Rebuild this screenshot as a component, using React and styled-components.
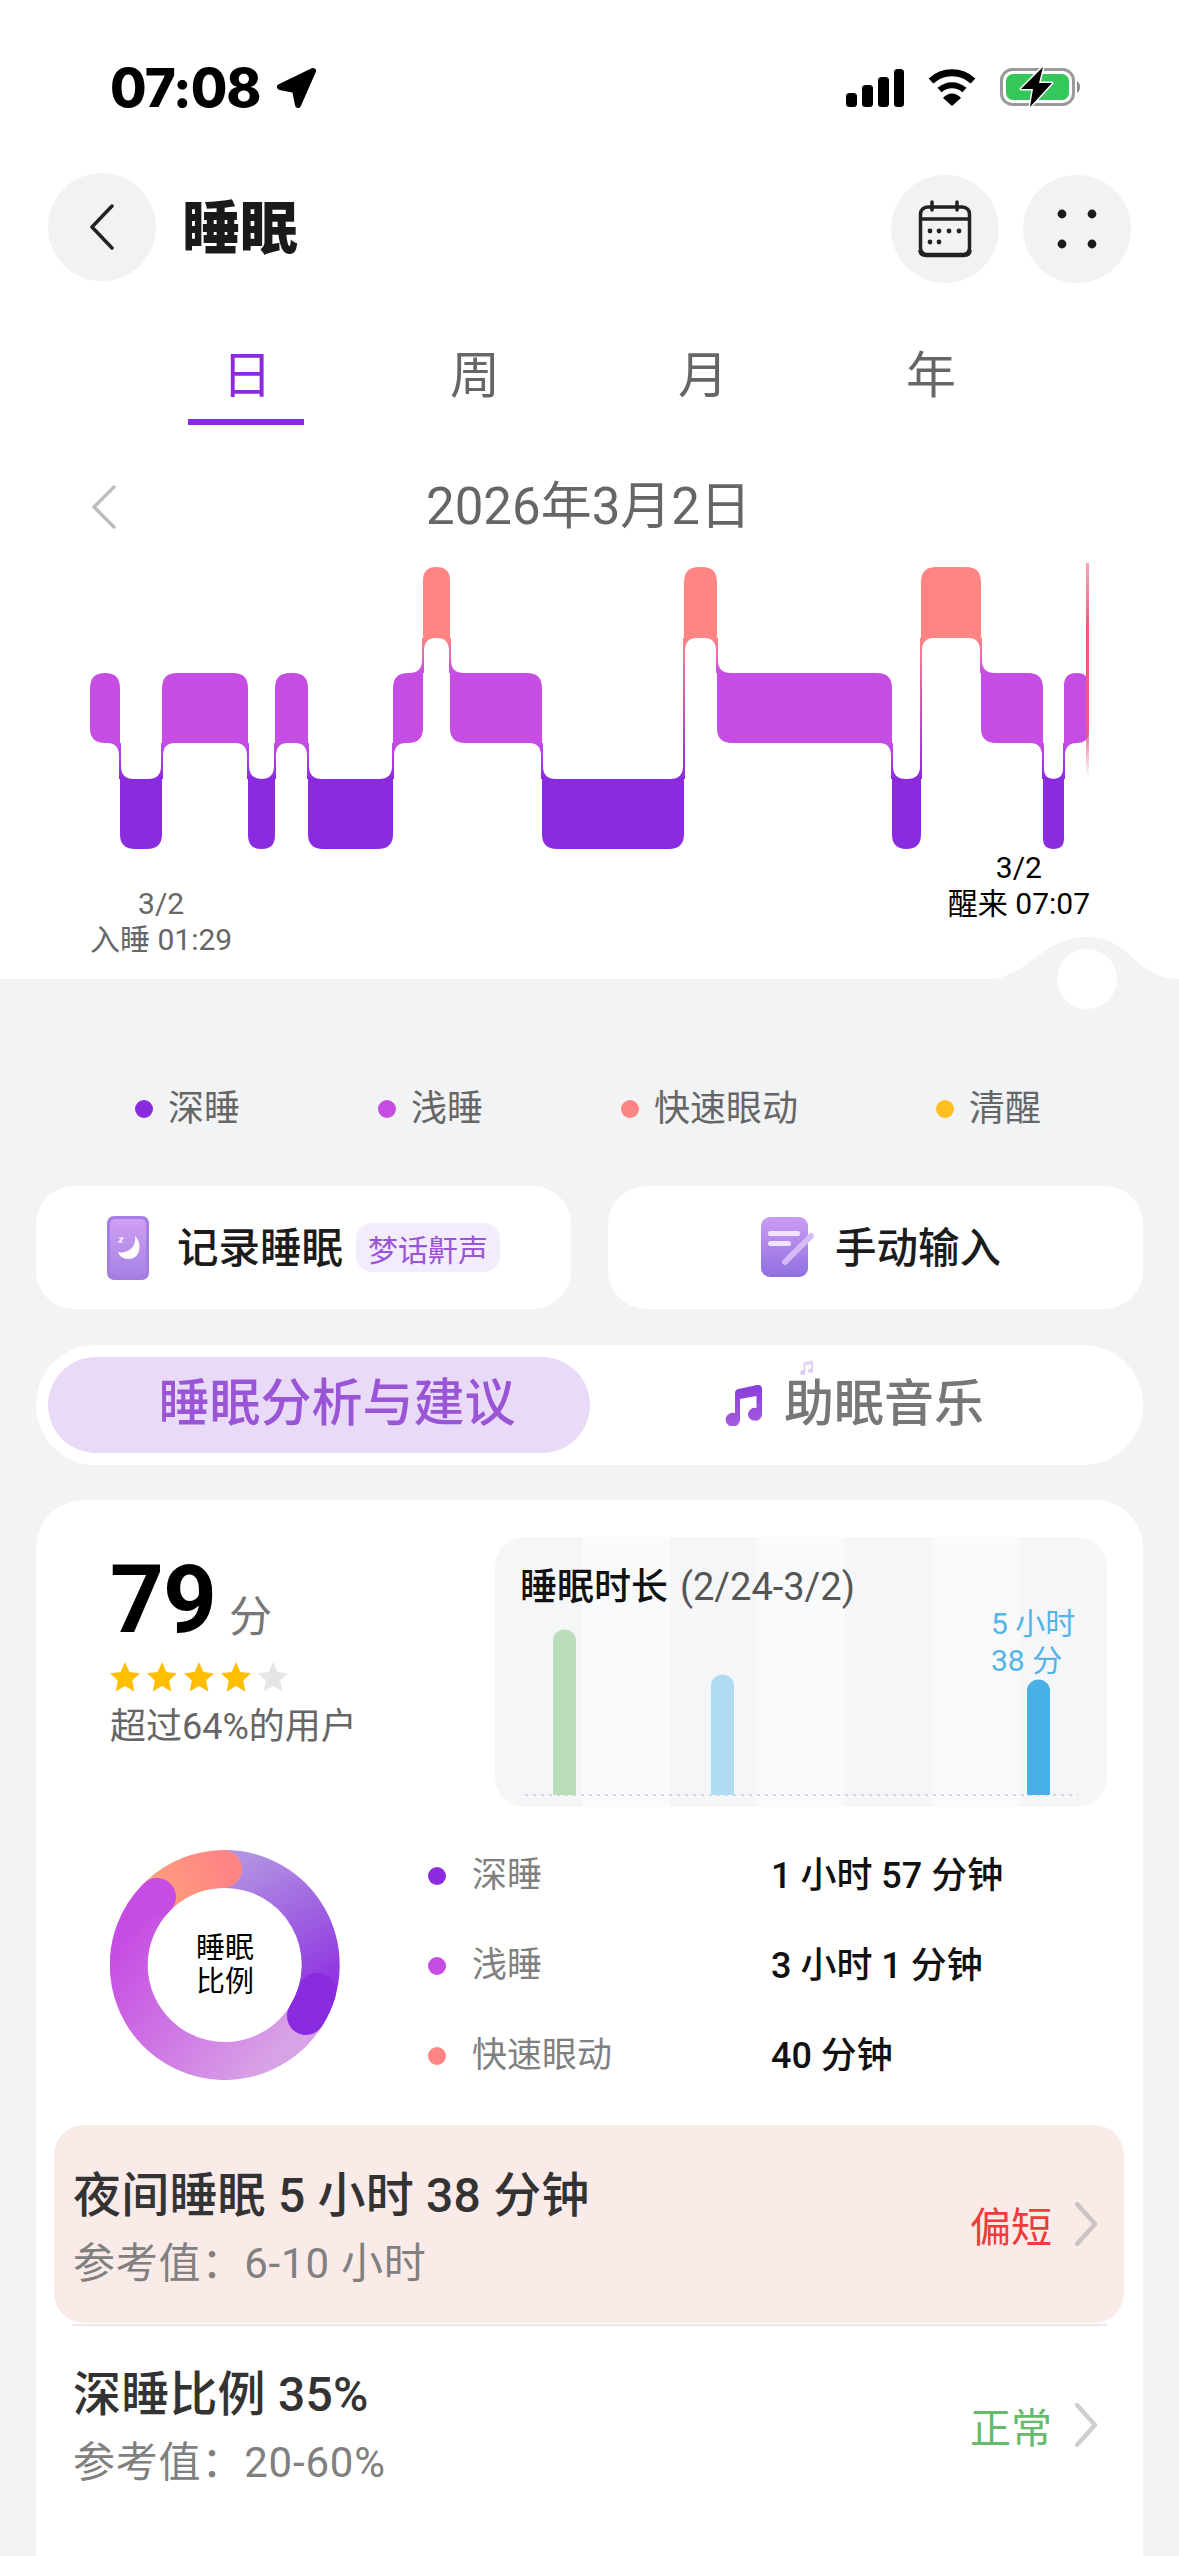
import React from 'react';
import styled, { createGlobalStyle } from 'styled-components';

const FONT = `Roboto, "Noto Sans CJK SC", sans-serif`;
const DEEP = '#8B2BE0';
const LIGHT = '#C64DE3';
const REM = '#FF8585';

const LEVELS = {
  deep: { top: 779, bottom: 849, rank: 0, color: DEEP },
  light: { top: 673, bottom: 743, rank: 1, color: LIGHT },
  rem: { top: 567, bottom: 638, rank: 2, color: REM },
};

const SEGMENTS = [
  ['light', 90, 120], ['deep', 120, 162], ['light', 162, 248], ['deep', 248, 275],
  ['light', 275, 308], ['deep', 308, 393], ['light', 393, 423], ['rem', 423, 450],
  ['light', 450, 542], ['deep', 542, 684], ['rem', 684, 717], ['light', 717, 892],
  ['deep', 892, 921], ['rem', 921, 981], ['light', 981, 1043], ['deep', 1043, 1064],
  ['light', 1064, 1089],
];

// a bar keeps square corners where it joins the neighbour's connector
const barPath = (seg, prev, next) => {
  const [name, x1, x2] = seg;
  const { top, bottom, rank } = LEVELS[name];
  const r = Math.min(15, (x2 - x1) / 2);
  const prevRank = prev ? LEVELS[prev[0]].rank : null;
  const nextRank = next ? LEVELS[next[0]].rank : null;
  const tl = prevRank !== null && prevRank > rank ? 0 : r;
  const bl = prevRank !== null && prevRank < rank ? 0 : r;
  const tr = nextRank !== null && nextRank > rank ? 0 : r;
  const br = nextRank !== null && nextRank < rank ? 0 : r;
  return `M${x1 + tl} ${top} L${x2 - tr} ${top} Q${x2} ${top} ${x2} ${top + tr} L${x2} ${bottom - br} Q${x2} ${bottom} ${x2 - br} ${bottom} L${x1 + bl} ${bottom} Q${x1} ${bottom} ${x1} ${bottom - bl} L${x1} ${top + tl} Q${x1} ${top} ${x1 + tl} ${top} Z`;
};

const connector = (a, b) => {
  const la = LEVELS[a[0]];
  const lb = LEVELS[b[0]];
  const x = a[2];
  const upper = la.rank > lb.rank ? a : b;
  const lower = la.rank > lb.rank ? b : a;
  const s = la.rank > lb.rank ? 1 : -1;
  const yt = LEVELS[upper[0]].bottom;
  const yb = LEVELS[lower[0]].top;
  const ru = Math.min(13, (upper[2] - upper[1]) / 2);
  const rl = Math.min(13, (lower[2] - lower[1]) / 2);
  const d = `M${x - s * ru} ${yt} L${x + s} ${yt} L${x + s} ${yb - rl} Q${x + s} ${yb} ${x + s * (1 + rl)} ${yb} L${x - s} ${yb} L${x - s} ${yt + ru} Q${x - s} ${yt} ${x - s * ru} ${yt} Z`;
  return { d, yt, yb, from: LEVELS[upper[0]].color, to: LEVELS[lower[0]].color };
};

const CONNECTORS = SEGMENTS.slice(1).map((seg, i) => connector(SEGMENTS[i], seg));

const STRIPES = [0, 1, 2, 3, 4, 5, 6];
const STAGES = [
  { label: '深睡', color: DEEP, value: '1 小时 57 分钟' },
  { label: '浅睡', color: LIGHT, value: '3 小时 1 分钟' },
  { label: '快速眼动', color: REM, value: '40 分钟' },
];

const GlobalStyle = createGlobalStyle`
  html, body { margin: 0; padding: 0; background: #F1F3F5; }
  * { box-sizing: border-box; }
`;

const Page = styled.div`
  width: 1179px;
  height: 2556px;
  overflow: hidden;
  background: #F1F3F5;
  font-family: ${FONT};
`;

const TopPanel = styled.div`
  position: relative;
  height: 979px;
  background: #fff;
`;

const StatusBar = styled.div`
  height: 173px;
  padding: 64px 95px 0 110px;
  display: flex;
  justify-content: space-between;
`;

const Time = styled.div`
  display: flex;
  align-items: center;
  gap: 15px;
  height: 48px;
  font-family: Inter, sans-serif;
  font-size: 53px;
  font-weight: 800;
  letter-spacing: -1px;
  color: #000;
`;

const StatusIcons = styled.div`
  display: flex;
  align-items: center;
  gap: 23px;
  height: 48px;
`;

const Header = styled.div`
  height: 110px;
  padding: 0 48px;
  display: flex;
  align-items: flex-start;
`;

const RoundButton = styled.div`
  width: 108px;
  height: 108px;
  border-radius: 50%;
  background: #F2F2F2;
  display: flex;
  align-items: center;
  justify-content: center;
  flex: none;
  margin-top: ${p => p.$drop || 0}px;
  margin-left: ${p => p.$gap || 0}px;
`;

const Title = styled.div`
  margin-left: 26px;
  flex: 1;
  height: 108px;
  line-height: 112px;
  font-size: 58px;
  font-weight: 900;
  color: #1a1a1a;
`;

const Tabs = styled.div`
  margin-top: 54px;
  margin-left: 133px;
  width: 912px;
  display: grid;
  grid-template-columns: repeat(4, 228px);
`;

const Tab = styled.div`
  position: relative;
  height: 88px;
  text-align: center;
  font-size: 50px;
  line-height: 78px;
  color: ${p => (p.$active ? '#8B2BE0' : '#666')};
  ${p => p.$active && `
    &::after {
      content: '';
      position: absolute;
      left: 55px;
      width: 116px;
      bottom: 0;
      height: 6px;
      background: #8B2BE0;
    }
  `}
`;

const DateRow = styled.div`
  margin-top: 50px;
  height: 64px;
  padding-left: 92px;
  display: flex;
  align-items: center;
`;

const DateText = styled.div`
  margin-left: 310px;
  font-size: 51px;
  line-height: 64px;
  color: #666;
  white-space: nowrap;
`;

const HypnoChart = styled.svg`
  display: block;
  width: 1179px;
  height: 288px;
  margin-top: 23px;
`;

const TimeLabels = styled.div`
  padding: 0 89px 0 90px;
  display: flex;
  justify-content: space-between;
  align-items: flex-start;
`;

const TimeLabel = styled.div`
  margin-top: ${p => (p.$low ? 36 : 0)}px;
  text-align: center;
  font-size: 30px;
  line-height: 36px;
  white-space: nowrap;
  color: ${p => (p.$low ? '#666' : '#000')};
`;

const Bump = styled.svg`
  position: absolute;
  left: 0;
  top: 920px;
  width: 1179px;
  height: 90px;
`;

const Legend = styled.div`
  margin-top: 108px;
  padding: 0 138px 0 135px;
  display: flex;
  justify-content: space-between;
`;

const LegendItem = styled.div`
  display: flex;
  align-items: center;
  height: 44px;
  line-height: 44px;
  font-size: 36px;
  color: #666;
`;

const Dot = styled.span`
  width: 18px;
  height: 18px;
  border-radius: 50%;
  flex: none;
  background: ${p => p.$color};
  margin-right: ${p => p.$space}px;
`;

const ActionRow = styled.div`
  margin-top: 55px;
  padding: 0 36px;
  display: grid;
  grid-template-columns: 535px 535px;
  gap: 37px;
`;

const ActionCard = styled.div`
  height: 123px;
  border-radius: 38px;
  background: #fff;
  display: flex;
  align-items: center;
  justify-content: center;
  padding-left: ${p => p.$inset || 0}px;
  font-size: 41.5px;
  font-weight: 500;
  color: #1c1c1c;
`;

const ActionLabel = styled.span`
  margin-bottom: 6px;
`;

const ActionIcon = styled.svg`
  flex: none;
  margin-right: ${p => p.$space}px;
`;

const Badge = styled.span`
  margin-left: 13px;
  width: 144px;
  height: 49px;
  border-radius: 16px;
  background: #F3ECFC;
  color: #9A55D6;
  font-size: 30px;
  font-weight: 400;
  display: flex;
  align-items: center;
  justify-content: center;
`;

const Toggle = styled.div`
  margin: 36px 36px 0;
  height: 120px;
  padding: 12px;
  border-radius: 60px;
  background: #fff;
  display: flex;
`;

const TogglePill = styled.div`
  width: 542px;
  padding: 0 0 12px 36px;
  border-radius: 48px;
  background: #E9DBF7;
  color: #9A55D6;
  font-size: 51px;
  font-weight: 500;
  display: flex;
  align-items: center;
  justify-content: center;
`;

const ToggleOption = styled.div`
  position: relative;
  flex: 1;
  color: #777;
  font-size: 50px;
  font-weight: 500;
  display: flex;
  align-items: center;
  justify-content: center;
  gap: 22px;
  padding-right: 12px;
`;

const ToggleText = styled.span`
  margin-bottom: 12px;
`;

const SmallNote = styled.div`
  position: absolute;
  left: 210px;
  top: 3px;
  display: flex;
`;

const Card = styled.div`
  margin: 35px 36px 0;
  height: 1100px;
  border-radius: 48px 48px 0 0;
  background: #fff;
  overflow: hidden;
`;

const ScoreRow = styled.div`
  padding: 37px 36px 0 74px;
  display: flex;
  justify-content: space-between;
`;

const ScoreColumn = styled.div`
  padding-top: 15px;
`;

const ScoreLine = styled.div`
  display: flex;
  align-items: baseline;
  height: 96px;
`;

const ScoreValue = styled.span`
  font-size: 94px;
  line-height: 96px;
  font-weight: 700;
  letter-spacing: -1px;
  color: #000;
`;

const ScoreUnit = styled.span`
  margin-left: 13px;
  font-size: 43px;
  color: #777;
`;

const Stars = styled.div`
  margin-top: 14px;
  display: flex;
  gap: 7px;
`;

const ScoreNote = styled.div`
  margin-top: 13px;
  font-size: 36px;
  line-height: 44px;
  color: #666;
  white-space: nowrap;
`;

const TrendPanel = styled.div`
  position: relative;
  width: 612px;
  height: 270px;
  border-radius: 30px;
  overflow: hidden;
`;

const StripeGrid = styled.div`
  position: absolute;
  inset: 0;
  display: grid;
  grid-template-columns: repeat(7, 1fr);
`;

const Stripe = styled.div`
  background: ${p => (p.$dark ? '#F4F6F8' : '#F9FAFB')};
`;

const TrendTitle = styled.div`
  position: relative;
  padding: 28px 0 0 25px;
  height: 72px;
  font-size: 37px;
  line-height: 44px;
  font-weight: 500;
  color: #111;
  white-space: nowrap;
`;

const TrendRange = styled.span`
  margin-left: 12px;
  font-weight: 400;
  font-size: 38px;
  color: #555;
`;

const TrendChart = styled.svg`
  position: relative;
  display: block;
`;

const TrendValue = styled.div`
  position: absolute;
  left: 496px;
  top: 68px;
  font-size: 30px;
  line-height: 37px;
  color: #55B3E6;
  white-space: nowrap;
`;

const RatioRow = styled.div`
  margin-top: 23px;
  padding-left: 74px;
  height: 270px;
  display: flex;
  align-items: center;
`;

const Donut = styled.div`
  position: relative;
  width: 230px;
  height: 230px;
  flex: none;
`;

const DonutLabel = styled.div`
  position: absolute;
  inset: 0;
  display: flex;
  align-items: center;
  justify-content: center;
  text-align: center;
  font-size: 29px;
  line-height: 34px;
  color: #000;
`;

const StageList = styled.div`
  margin: 2px 0 0 88px;
`;

const StageRow = styled.div`
  height: 90px;
  display: flex;
  align-items: center;
`;

const StageName = styled.span`
  width: 299px;
  font-size: 35px;
  line-height: 44px;
  color: #808080;
`;

const StageValue = styled.span`
  font-size: 36px;
  line-height: 44px;
  font-weight: 500;
  color: #111;
  white-space: nowrap;
`;

const ReviewRow = styled.div`
  height: 198px;
  margin: ${p => (p.$first ? '25px' : '0')} 19px 0 18px;
  padding: 0 27px 0 19px;
  border-radius: 30px;
  background: ${p => (p.$alert ? '#FAEBE9' : 'transparent')};
  display: flex;
  align-items: center;
  justify-content: space-between;
`;

const ReviewText = styled.div`
  padding-top: ${p => p.$top}px;
`;

const ReviewTitle = styled.div`
  font-size: 48px;
  line-height: 60px;
  font-weight: 500;
  letter-spacing: 0.2px;
  color: #333;
  white-space: nowrap;
`;

const ReviewHint = styled.div`
  margin-top: 8px;
  font-size: 42px;
  line-height: 60px;
  letter-spacing: 0.8px;
  color: #808080;
  white-space: nowrap;
`;

const ReviewStatus = styled.div`
  display: flex;
  align-items: center;
  gap: 23px;
  font-size: 41px;
  color: ${p => p.$color};
`;

const Divider = styled.div`
  height: 2px;
  margin: 1px 36px 0;
  background: #E9E9E9;
`;

const Star = ({ on }) => (
  <svg width="30" height="30" viewBox="0 0 30 30">
    <path
      d="M15 0 L19.4 10 L30 11.2 L22.2 18.4 L24.3 29.5 L15 24 L5.7 29.5 L7.8 18.4 L0 11.2 L10.6 10 Z"
      fill={on ? '#FFBE00' : '#E6E6E6'}
    />
  </svg>
);

const Chevron = ({ left, color, width = 22, height = 44, stroke = 4 }) => (
  <svg width={width} height={height} viewBox={`0 0 ${width} ${height}`}>
    <path
      d={left ? `M${width - 2} 2 L2 ${height / 2} L${width - 2} ${height - 2}` : `M2 2 L${width - 2} ${height / 2} L2 ${height - 2}`}
      fill="none"
      stroke={color}
      strokeWidth={stroke}
      strokeLinecap="round"
      strokeLinejoin="round"
    />
  </svg>
);

const BatteryIcon = () => (
  <svg width="84" height="44" viewBox="0 0 84 44">
    <rect x="1.5" y="3.5" width="72" height="35" rx="11" fill="none" stroke="#9a9a9a" strokeWidth="3" />
    <rect x="6" y="8" width="63" height="26" rx="7" fill="#35C759" />
    <path d="M77 15 C81 17 81 25 77 27 Z" fill="#8a8a8a" />
    <path
      d="M43 1 L21 23 L33 23 L30 41 L52 17 L39 17 Z"
      fill="#000"
      stroke="#fff"
      strokeWidth="3"
      strokeLinejoin="round"
      paintOrder="stroke"
    />
  </svg>
);

const MusicNote = ({ width, height, color, id }) => (
  <svg width={width} height={height} viewBox="0 0 37 42">
    <defs>
      <linearGradient id={id} x1="0" y1="0" x2="0" y2="1">
        <stop offset="0" stopColor={color[0]} />
        <stop offset="1" stopColor={color[1]} />
      </linearGradient>
    </defs>
    <path
      fill={`url(#${id})`}
      d="M10 9 Q10 5.5 13.5 5 L32 1 Q37 0.5 37 5 V30 A7 6.5 0 1 1 31.5 24 V12 L15 15 V35 A7.2 7 0 1 1 10 29 Z"
    />
  </svg>
);

const App = () => (
  <Page>
    <GlobalStyle />
    <TopPanel>
      <StatusBar>
        <Time>
          07:08
          <svg width="41" height="42" viewBox="0 0 41 42">
            <path d="M37 4 L4 20 L19 23 L22 38 Z" fill="#000" stroke="#000" strokeWidth="6" strokeLinejoin="round" />
          </svg>
        </Time>
        <StatusIcons>
          <svg width="58" height="38" viewBox="0 0 58 38">
            <rect x="0" y="24" width="11" height="14" rx="3.5" fill="#000" />
            <rect x="16" y="16" width="11" height="22" rx="3.5" fill="#000" />
            <rect x="32" y="8" width="11" height="30" rx="3.5" fill="#000" />
            <rect x="48" y="0" width="10" height="38" rx="3.5" fill="#000" />
          </svg>
          <svg width="50" height="38" viewBox="0 0 50 38">
            <path d="M4 12 C16 1 34 1 46 12" fill="none" stroke="#000" strokeWidth="7" />
            <path d="M12.5 21 C20 14.5 30 14.5 37.5 21" fill="none" stroke="#000" strokeWidth="6" />
            <path d="M16 29 C21 23 29 23 34 29 L25 37 Z" fill="#000" />
          </svg>
          <BatteryIcon />
        </StatusIcons>
      </StatusBar>

      <Header>
        <RoundButton>
          <Chevron left color="#222" width={24} height={46} stroke={3.5} />
        </RoundButton>
        <Title>睡眠</Title>
        <RoundButton $drop={2}>
          <svg width="54" height="58" viewBox="0 0 54 58">
            <rect x="2.5" y="7" width="49" height="48" rx="7" fill="none" stroke="#222" strokeWidth="3.5" />
            <path d="M2.5 19 H51.5" stroke="#222" strokeWidth="3.5" />
            <path d="M14 2 V10 M39 2 V10" stroke="#222" strokeWidth="3.5" strokeLinecap="round" />
            <path d="M2.5 50 Q2.5 55 9 55 H45 Q51.5 55 51.5 50" fill="none" stroke="#222" strokeWidth="4.5" />
            {[12, 21, 31, 41].map(x => <circle key={x} cx={x} cy="31" r="2.4" fill="#222" />)}
            {[12, 21].map(x => <circle key={x} cx={x} cy="42" r="2.4" fill="#222" />)}
          </svg>
        </RoundButton>
        <RoundButton $drop={2} $gap={24}>
          <svg width="40" height="40" viewBox="0 0 40 40">
            {[5, 35].map(x => [5, 35].map(y => <circle key={`${x}-${y}`} cx={x} cy={y} r="4.4" fill="#1a1a1a" />))}
          </svg>
        </RoundButton>
      </Header>

      <Tabs>
        <Tab $active>日</Tab>
        <Tab>周</Tab>
        <Tab>月</Tab>
        <Tab>年</Tab>
      </Tabs>

      <DateRow>
        <Chevron left color="#BDBDBD" width={24} height={44} stroke={3.5} />
        <DateText>2026年3月2日</DateText>
      </DateRow>

      <HypnoChart viewBox="0 562 1179 288">
        <defs>
          {CONNECTORS.map((c, i) => (
            <linearGradient key={i} id={`link${i}`} gradientUnits="userSpaceOnUse" x1="0" y1={c.yt} x2="0" y2={c.yb}>
              <stop offset="0" stopColor={c.from} />
              <stop offset="1" stopColor={c.to} />
            </linearGradient>
          ))}
          <linearGradient id="nowLine" x1="0" y1="0" x2="0" y2="1">
            <stop offset="0" stopColor="#F0607A" stopOpacity="0.55" />
            <stop offset="0.3" stopColor="#EE5A78" />
            <stop offset="0.75" stopColor="#EE5A78" />
            <stop offset="1" stopColor="#EE5A78" stopOpacity="0" />
          </linearGradient>
        </defs>
        {SEGMENTS.map((seg, i) => (
          <path key={i} d={barPath(seg, SEGMENTS[i - 1], SEGMENTS[i + 1])} fill={LEVELS[seg[0]].color} />
        ))}
        {CONNECTORS.map((c, i) => <path key={i} d={c.d} fill={`url(#link${i})`} />)}
        <rect x="1086" y="563" width="3" height="214" fill="url(#nowLine)" />
      </HypnoChart>

      <TimeLabels>
        <TimeLabel $low>3/2<br />入睡 01:29</TimeLabel>
        <TimeLabel>3/2<br />醒来 07:07</TimeLabel>
      </TimeLabels>

      <Bump viewBox="0 920 1179 90">
        <path d="M985 980 C1030 978 1040 937 1088 937 C1130 937 1135 978 1179 979 L1179 980 Z" fill="#F1F3F5" />
        <circle cx="1087" cy="979" r="30" fill="#fff" />
      </Bump>
    </TopPanel>

    <Legend>
      <LegendItem><Dot $color={DEEP} $space={15} />深睡</LegendItem>
      <LegendItem><Dot $color={LIGHT} $space={15} />浅睡</LegendItem>
      <LegendItem><Dot $color={REM} $space={15} />快速眼动</LegendItem>
      <LegendItem><Dot $color="#FFC01F" $space={15} />清醒</LegendItem>
    </Legend>

    <ActionRow>
      <ActionCard>
        <ActionIcon $space={28} width="42" height="64" viewBox="0 0 42 64">
          <defs>
            <linearGradient id="phoneFill" x1="0" y1="0" x2="0" y2="1">
              <stop offset="0" stopColor="#D09FF1" />
              <stop offset="1" stopColor="#A583E6" />
            </linearGradient>
          </defs>
          <rect width="42" height="64" rx="7" fill="#A67DE2" />
          <rect x="3" y="3" width="36" height="56" rx="5" fill="url(#phoneFill)" />
          <path d="M28 20 C36 28 33 43 22 43 C16 43 12 40 11 36 C18 38 30 33 28 20 Z" fill="#fff" />
          <path d="M12 22 H16 L12 26 H16" fill="none" stroke="#fff" strokeWidth="1.2" />
        </ActionIcon>
        <ActionLabel>记录睡眠</ActionLabel>
        <Badge>梦话鼾声</Badge>
      </ActionCard>
      <ActionCard $inset={10}>
        <ActionIcon $space={21} width="54" height="61" viewBox="0 0 54 61">
          <defs>
            <linearGradient id="noteFill" x1="0" y1="0" x2="0" y2="1">
              <stop offset="0" stopColor="#CB9CF2" />
              <stop offset="1" stopColor="#8F6FE1" />
            </linearGradient>
          </defs>
          <rect x="1" width="47" height="60" rx="9" fill="url(#noteFill)" />
          <rect x="8" y="14" width="32" height="5" rx="2.5" fill="#F0E3FB" />
          <rect x="8" y="24" width="23" height="5" rx="2.5" fill="#F0E3FB" />
          <path d="M51 19 L25 45" stroke="#D5BBF5" strokeWidth="6" strokeLinecap="round" />
        </ActionIcon>
        <ActionLabel>手动输入</ActionLabel>
      </ActionCard>
    </ActionRow>

    <Toggle>
      <TogglePill>睡眠分析与建议</TogglePill>
      <ToggleOption>
        <SmallNote>
          <MusicNote id="noteSmall" width={13} height={15} color={['#E4D6F7', '#DCCBF4']} />
        </SmallNote>
        <MusicNote id="noteBig" width={37} height={42} color={['#8A3EDB', '#A55CDD']} />
        <ToggleText>助眠音乐</ToggleText>
      </ToggleOption>
    </Toggle>

    <Card>
      <ScoreRow>
        <ScoreColumn>
          <ScoreLine>
            <ScoreValue>79</ScoreValue>
            <ScoreUnit>分</ScoreUnit>
          </ScoreLine>
          <Stars>
            {[true, true, true, true, false].map((on, i) => <Star key={i} on={on} />)}
          </Stars>
          <ScoreNote>超过64%的用户</ScoreNote>
        </ScoreColumn>
        <TrendPanel>
          <StripeGrid>
            {STRIPES.map(i => <Stripe key={i} $dark={i % 2 === 0} />)}
          </StripeGrid>
          <TrendTitle>睡眠时长<TrendRange>(2/24-3/2)</TrendRange></TrendTitle>
          <TrendChart width="612" height="198" viewBox="495 1609 612 198">
            <path d="M525 1795 H1078" stroke="#C9CDD2" strokeWidth="1.5" strokeDasharray="3 5" />
            <path d="M553 1795 V1641 A11.5 11.5 0 0 1 576 1641 V1795 Z" fill="#BADDBA" />
            <path d="M711 1795 V1686 A11.5 11.5 0 0 1 734 1686 V1795 Z" fill="#B0DAF1" />
            <path d="M1027 1795 V1691 A11.5 11.5 0 0 1 1050 1691 V1795 Z" fill="#47B0E4" />
          </TrendChart>
          <TrendValue>5 小时<br />38 分</TrendValue>
        </TrendPanel>
      </ScoreRow>

      <RatioRow>
        <Donut>
          <svg width="230" height="230" viewBox="0 0 230 230">
            <defs>
              <linearGradient id="deepArc" gradientUnits="userSpaceOnUse" x1="115" y1="19" x2="196" y2="166">
                <stop offset="0" stopColor="#B192E2" />
                <stop offset="1" stopColor="#8B2BE0" />
              </linearGradient>
              <linearGradient id="lightArc" gradientUnits="userSpaceOnUse" x1="196" y1="166" x2="47" y2="48">
                <stop offset="0" stopColor="#D8A2E6" />
                <stop offset="1" stopColor="#C64DE3" />
              </linearGradient>
              <linearGradient id="remArc" gradientUnits="userSpaceOnUse" x1="47" y1="48" x2="115" y2="19">
                <stop offset="0" stopColor="#FF9E7C" />
                <stop offset="1" stopColor="#FF8585" />
              </linearGradient>
            </defs>
            <path d="M112 19 A96 96 0 0 1 196 166" fill="none" stroke="url(#deepArc)" strokeWidth="38" />
            <path d="M50 44 A96 96 0 0 1 113 19" fill="none" stroke="url(#remArc)" strokeWidth="38" strokeLinecap="round" />
            <path d="M199 161 A96 96 0 1 1 46 48" fill="none" stroke="url(#lightArc)" strokeWidth="38" />
            <path d="M46 48 A96 96 0 0 1 47 47" fill="none" stroke="#C64DE3" strokeWidth="38" strokeLinecap="round" />
            <path d="M207 142 A96 96 0 0 1 196 166" fill="none" stroke="#8B2BE0" strokeWidth="38" strokeLinecap="round" />
          </svg>
          <DonutLabel>睡眠<br />比例</DonutLabel>
        </Donut>
        <StageList>
          {STAGES.map(stage => (
            <StageRow key={stage.label}>
              <Dot $color={stage.color} $space={26} />
              <StageName>{stage.label}</StageName>
              <StageValue>{stage.value}</StageValue>
            </StageRow>
          ))}
        </StageList>
      </RatioRow>

      <ReviewRow $first $alert>
        <ReviewText $top={12}>
          <ReviewTitle>夜间睡眠 5 小时 38 分钟</ReviewTitle>
          <ReviewHint>参考值：6-10 小时</ReviewHint>
        </ReviewText>
        <ReviewStatus $color="#EE3B3B">
          偏短
          <Chevron color="#C9C5C4" width={22} height={44} stroke={4.5} />
        </ReviewStatus>
      </ReviewRow>
      <Divider />
      <ReviewRow>
        <ReviewText $top={8}>
          <ReviewTitle>深睡比例 35%</ReviewTitle>
          <ReviewHint>参考值：20-60%</ReviewHint>
        </ReviewText>
        <ReviewStatus $color="#66BB6A">
          正常
          <Chevron color="#CFCFCF" width={22} height={44} stroke={4.5} />
        </ReviewStatus>
      </ReviewRow>
    </Card>
  </Page>
);

export default App;
